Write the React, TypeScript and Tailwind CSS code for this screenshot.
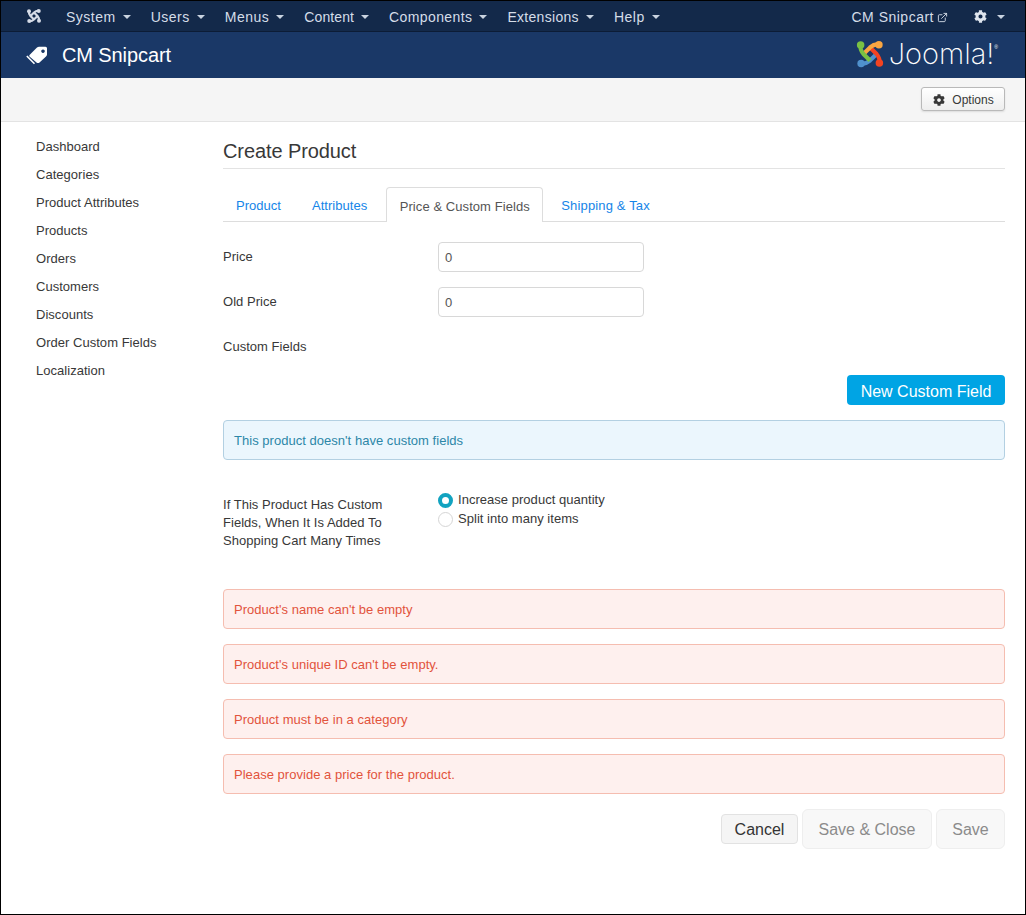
import React from "react";
import { FaCog } from "react-icons/fa";
import { FiExternalLink } from "react-icons/fi";

const Caret = () => (
  <span className="ml-[7px] inline-block h-0 w-0 border-x-[4px] border-t-[4px] border-x-transparent border-t-[#c9d3e0] align-middle" />
);

const JoomlaMark = ({ size, mono }: { size: number; mono?: boolean }) => {
  const c = mono ? ["#d5dbe6", "#d5dbe6", "#d5dbe6", "#d5dbe6"] : ["#7ac143", "#f9a541", "#f44321", "#5091cd"];
  return (
    <svg width={size} height={size} viewBox="0 0 32 32" fill="none" strokeWidth="4.4">
      <path d="M7 26 Q11 27 16 23 L23 16" stroke={c[3]} />
      <circle cx="6.5" cy="26" r="4" fill={c[3]} />
      <path d="M26 25 Q27 21 23 16 L16 9" stroke={c[2]} />
      <circle cx="26" cy="25.5" r="4" fill={c[2]} />
      <path d="M25 6 Q21 5 16 9 L9 16" stroke={c[1]} />
      <circle cx="25.5" cy="6" r="4" fill={c[1]} />
      <path d="M6 7 Q5 11 9 16 L16 23" stroke={c[0]} />
      <circle cx="6" cy="6.5" r="4" fill={c[0]} />
    </svg>
  );
};

const TagIcon = () => (
  <svg width="22" height="19" viewBox="0 0 22 19" className="shrink-0" fill="white">
    <path
      fillRule="evenodd"
      d="M3.5 9 L11 1.5 Q12 0.8 13 0.8 H19.5 Q21 0.8 21 2.3 V8.5 Q21 9.6 20 10.5 L13.5 16.5 Q12 17.5 10.5 16.5 L3.5 10.5 Q3 9.8 3.5 9 Z M17 3.4 A1.8 1.8 0 1 0 17.01 3.4 Z"
    />
    <path d="M0.8 10 L8.5 17.8" stroke="white" strokeWidth="1.6" fill="none" />
  </svg>
);

const NavItem = ({ label, className }: { label: string; className?: string }) => (
  <span className={"flex items-center whitespace-nowrap " + (className ?? "")}>
    {label}
    <Caret />
  </span>
);

const Alert = ({ text, info }: { text: string; info?: boolean }) => (
  <div
    className={
      info
        ? "flex h-10 items-center rounded-[4px] border border-[#b3d0e2] bg-[#ebf6fd] px-[10px] pt-[2px] text-[#2d87a8]"
        : "flex h-10 items-center rounded-[4px] border border-[#f5bdb0] bg-[#fef0ee] px-[10px] pt-[2px] text-[#e2533c]"
    }
  >
    {text}
  </div>
);

const Field = ({ label }: { label: string }) => (
  <div className="flex h-[30px] items-center">
    <div className="w-[215px]">{label}</div>
    <div className="flex h-[30px] w-[206px] items-center rounded-[4px] border border-[#d8d8d8] px-[6px] pt-[2px] text-[#555]">0</div>
  </div>
);

export default function App() {
  const side = ["Dashboard", "Categories", "Product Attributes", "Products", "Orders", "Customers", "Discounts", "Order Custom Fields", "Localization"];
  return (
    <div className="flex h-[915px] flex-col border border-black bg-white text-[13px] leading-[18px] tracking-[0.03px] text-[#383838] [font-family:'Liberation_Sans',Arial,sans-serif]">
      <nav className="flex h-[31px] items-center border-b border-[#0c1c36] bg-[#13294a] pl-[25px] pr-[20px] pt-[2px] text-[14px] tracking-[0.5px] text-[#d5dde8]">
        <span className="-mt-[2px]"><JoomlaMark size={16} mono /></span>
        <div className="ml-[24px] flex gap-[20px]">
          <NavItem label="System" />
          <NavItem label="Users" />
          <NavItem label="Menus" />
          <NavItem label="Content" className="tracking-[0.1px]" />
          <NavItem label="Components" className="tracking-[0.4px]" />
          <NavItem label="Extensions" className="tracking-[0.3px]" />
          <NavItem label="Help" />
        </div>
        <div className="ml-auto flex items-center">
          <span className="flex items-center">
            CM Snipcart
            <FiExternalLink className="ml-[3px] h-[11px] w-[11px]" />
          </span>
          <span className="-mt-[2px] ml-[26px] flex items-center">
            <FaCog className="h-[13px] w-[13px] text-[#dfe5ee]" />
            <span className="ml-[3px]"><Caret /></span>
          </span>
        </div>
      </nav>
      <header className="flex h-[46px] items-center bg-[#1a3867] pl-[25px] pr-[27px] text-white">
        <TagIcon />
        <span className="ml-[14px] text-[20px] tracking-[-0.1px]">CM Snipcart</span>
        <div className="-mt-[2px] ml-auto flex items-center">
          <JoomlaMark size={30} />
          <span className="ml-[4px] text-[29px] font-extralight leading-[30px] tracking-[0px] [font-family:Inter,sans-serif]">Joomla!</span>
          <span className="mb-[14px] text-[5px] leading-[5px] tracking-normal">®</span>
        </div>
      </header>
      <div className="flex h-[44px] items-center justify-end border-b border-[#e3e3e3] bg-[#f5f5f5] pb-[1px] pr-[20px]">
        <button className="flex h-[24px] w-[84px] items-center justify-center gap-[7px] rounded-[3px] border border-[#b9b9b9] bg-gradient-to-b from-white to-[#eeeeee] pl-[1px] pt-[1px] text-[12px] tracking-normal shadow-[0_1px_2px_rgba(0,0,0,0.1)]">
          <FaCog className="h-[12px] w-[12px]" />
          Options
        </button>
      </div>
      <div className="flex flex-1">
        <aside className="w-[222px] shrink-0 pl-[35px] pt-[11px]">
          {side.map((s) => (
            <div key={s} className="flex h-[28px] items-center">{s}</div>
          ))}
        </aside>
        <main className="flex-1 pr-[20px] pt-[14px]">
          <h2 className="h-[33px] border-b border-[#e3e3e3] text-[20px] leading-[30px] tracking-[-0.1px]">Create Product</h2>
          <div className="mt-[18px] flex h-[35px] border-b border-[#ddd] pl-[13px] text-[#1585e8]">
            <span className="pt-[10px]">Product</span>
            <span className="ml-[31px] pt-[10px]">Attributes</span>
            <span className="relative ml-[19px] h-[35px] rounded-t-[4px] border border-b-0 border-[#ddd] bg-white px-[12.5px] pt-[10px] tracking-[0.07px] text-[#555]">Price &amp; Custom Fields</span>
            <span className="ml-[18px] pt-[10px] tracking-[0.15px]">Shipping &amp; Tax</span>
          </div>
          <div className="mt-[20px] flex flex-col gap-[15px]">
            <Field label="Price" />
            <Field label="Old Price" />
          </div>
          <div className="mt-[21px]">Custom Fields</div>
          <div className="mt-[19px] flex justify-end">
            <button className="h-[30px] w-[158px] rounded-[4px] bg-[#00a4e4] pt-[3px] text-[16px] tracking-normal text-white">New Custom Field</button>
          </div>
          <div className="mt-[15px]">
            <Alert info text="This product doesn't have custom fields" />
          </div>
          <div className="mt-[31px] flex h-[60px]">
            <div className="w-[215px] pr-[40px] pt-[5px]">If This Product Has Custom Fields, When It Is Added To Shopping Cart Many Times</div>
            <div className="-mt-[1px]">
              <div className="flex h-[19px] items-center gap-[5px]">
                <span className="mt-[1px] h-[15px] w-[15px] rounded-full border-[4px] border-[#12a3c0] bg-white" />
                Increase product quantity
              </div>
              <div className="flex h-[19px] items-center gap-[5px]">
                <span className="mt-[1px] h-[15px] w-[15px] rounded-full border border-[#d5d5d5] bg-white" />
                Split into many items
              </div>
            </div>
          </div>
          <div className="mt-[38px] flex flex-col gap-[15px]">
            <Alert text="Product's name can't be empty" />
            <Alert text="Product's unique ID can't be empty." />
            <Alert text="Product must be in a category" />
            <Alert text="Please provide a price for the product." />
          </div>
          <div className="mt-[15px] flex items-center justify-end gap-[4px] text-[16px] tracking-normal">
            <button className="h-[30px] w-[77px] rounded-[4px] border border-[#e2e2e2] bg-[#f5f5f5] pt-[2px] text-[#333]">Cancel</button>
            <button className="h-[40px] w-[130px] rounded-[6px] border border-[#eee] bg-[#f8f8f8] pt-[2px] text-[#8b8b8b]">Save &amp; Close</button>
            <button className="h-[40px] w-[69px] rounded-[6px] border border-[#eee] bg-[#f8f8f8] pt-[2px] text-[#8b8b8b]">Save</button>
          </div>
        </main>
      </div>
    </div>
  );
}
